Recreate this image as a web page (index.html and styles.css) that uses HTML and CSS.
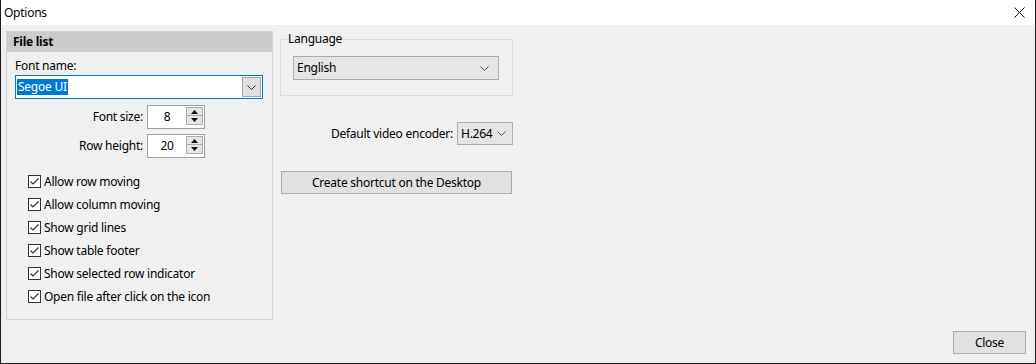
FILE: index.html
```html
<!DOCTYPE html>
<html lang="en">

<head>
    <meta charset="UTF-8">
    <title>Options</title>
    <link rel="stylesheet" href="styles.css">
</head>

<body>
    <div class="window">
        <div class="titlebar">
            <span>Options</span>
            <svg class="x" width="11" height="11" viewBox="0 0 11 11">
                <path d="M0.5 0.5 L10.5 10.5 M10.5 0.5 L0.5 10.5" stroke="#111" stroke-width="1" fill="none" />
            </svg>
        </div>

        <div class="client">
            <div class="main">
                <div class="panel">
                    <div class="panel-head">File list</div>
                    <div class="panel-body">
                        <div class="label">Font name:</div>
                        <div class="combo focus">
                            <span class="sel">Segoe UI</span>
                            <span class="drop">
                                <svg width="9" height="5" viewBox="0 0 9 5"><path d="M0.5 0.5 L4.5 4.5 L8.5 0.5" stroke="#333" fill="none" /></svg>
                            </span>
                        </div>

                        <div class="spin-row">
                            <span class="spin-label">Font size:</span>
                            <div class="spin">
                                <span class="spin-value">8</span>
                                <span class="spin-btns">
                                    <span class="spin-btn"><svg width="7" height="4" viewBox="0 0 7 4"><path d="M0 4 L3.5 0 L7 4 Z" fill="#111" /></svg></span>
                                    <span class="spin-btn"><svg width="7" height="4" viewBox="0 0 7 4"><path d="M0 0 L3.5 4 L7 0 Z" fill="#111" /></svg></span>
                                </span>
                            </div>
                        </div>
                        <div class="spin-row">
                            <span class="spin-label">Row height:</span>
                            <div class="spin">
                                <span class="spin-value">20</span>
                                <span class="spin-btns">
                                    <span class="spin-btn"><svg width="7" height="4" viewBox="0 0 7 4"><path d="M0 4 L3.5 0 L7 4 Z" fill="#111" /></svg></span>
                                    <span class="spin-btn"><svg width="7" height="4" viewBox="0 0 7 4"><path d="M0 0 L3.5 4 L7 0 Z" fill="#111" /></svg></span>
                                </span>
                            </div>
                        </div>

                        <div class="checks">
                            <label class="check"><span class="box"></span>Allow row moving</label>
                            <label class="check"><span class="box"></span>Allow column moving</label>
                            <label class="check"><span class="box"></span>Show grid lines</label>
                            <label class="check"><span class="box"></span>Show table footer</label>
                            <label class="check"><span class="box"></span>Show selected row indicator</label>
                            <label class="check"><span class="box"></span>Open file after click on the icon</label>
                        </div>
                    </div>
                </div>

                <div class="side">
                    <fieldset class="group">
                        <legend>Language</legend>
                        <div class="combo lang">
                            <span>English</span>
                            <svg class="chev" width="9" height="5" viewBox="0 0 9 5"><path d="M0.5 0.5 L4.5 4.5 L8.5 0.5" stroke="#555" fill="none" /></svg>
                        </div>
                    </fieldset>

                    <div class="encoder-row">
                        <span>Default video encoder:</span>
                        <div class="combo encoder">
                            <span>H.264</span>
                            <svg class="chev" width="9" height="5" viewBox="0 0 9 5"><path d="M0.5 0.5 L4.5 4.5 L8.5 0.5" stroke="#555" fill="none" /></svg>
                        </div>
                    </div>

                    <button class="btn shortcut">Create shortcut on the Desktop</button>
                </div>
            </div>

            <div class="footer">
                <button class="btn close">Close</button>
            </div>
        </div>
    </div>
</body>

</html>
```

FILE: styles.css
```css
* {
    box-sizing: border-box;
}

body {
    margin: 0;
    font-family: "Noto Sans", "Liberation Sans", sans-serif;
    font-size: 12px;
    line-height: 16px;
    letter-spacing: -0.25px;
    color: #000;
}

.window {
    width: 1036px;
    height: 364px;
    border: 1px solid #1b1b1b;
    border-top: 0;
    display: flex;
    flex-direction: column;
    background: #f0f0f0;
}

.titlebar {
    height: 25px;
    background: #fff;
    display: flex;
    align-items: center;
    justify-content: space-between;
    padding: 0 10px 0 3px;
}

.client {
    flex: 1;
    display: flex;
    flex-direction: column;
    padding: 6px 9px 9px 5px;
}

.main {
    flex: 1;
    display: flex;
    align-items: flex-start;
    gap: 7px;
}

/* left panel */
.panel {
    width: 267px;
    height: 289px;
    border: 1px solid #d2d2d2;
}

.panel-head {
    height: 20px;
    line-height: 20px;
    padding-left: 6px;
    background: #cccccc;
    font-weight: bold;
}

.panel-body {
    padding: 6px 8px 0 8px;
}

.label {
    margin-bottom: 1px;
}

.combo {
    display: flex;
    align-items: center;
    border: 1px solid #adadad;
    background: #e5e5e5;
}

.combo.focus {
    width: 248px;
    height: 24px;
    border-color: #0078d7;
    background: #fff;
    padding-left: 1px;
}

.sel {
    background: #0078d7;
    color: #fff;
    padding: 0 1px;
}

.drop {
    margin-left: auto;
    margin-right: 1px;
    width: 19px;
    height: 20px;
    border: 1px solid #a6a6a6;
    background: #e0e0e0;
    display: flex;
    align-items: center;
    justify-content: center;
}

.spin-row {
    display: flex;
    align-items: center;
    margin-top: 6px;
}

.spin-row+.spin-row {
    margin-top: 5px;
}

.spin-label {
    width: 132px;
    padding-right: 4px;
    text-align: right;
}

.spin {
    width: 58px;
    height: 24px;
    border: 1px solid #a0a0a0;
    background: #fff;
    display: flex;
}

.spin-value {
    flex: 1;
    text-align: center;
    line-height: 22px;
}

.spin-btns {
    width: 17px;
    margin: 1px 1px 0 0;
    display: flex;
    flex-direction: column;
}

.spin-btn {
    height: 9px;
    border: 1px solid #adadad;
    background: #e5e5e5;
    display: flex;
    align-items: center;
    justify-content: center;
}

.spin-btn+.spin-btn {
    border-top: 0;
}

.checks {
    margin-top: 12px;
    padding-left: 13px;
}

.check {
    height: 23px;
    display: flex;
    align-items: center;
    gap: 3px;
}

.box {
    width: 13px;
    height: 13px;
    border: 1px solid #333;
    background: #fff url("data:image/svg+xml;utf8,<svg xmlns='http://www.w3.org/2000/svg' width='11' height='11'><path d='M1.5 5.5 L4 8 L9.5 2.5' stroke='%23333' stroke-width='1.2' fill='none'/></svg>") no-repeat center;
}

/* right side */
.side {
    width: 233px;
}

.group {
    margin: 0;
    padding: 0 12px 15px 12px;
    border: 1px solid #dcdcdc;
    min-width: 0;
}

.group legend {
    padding: 0 1px;
    margin-left: -6px;
}

.combo.lang {
    width: 206px;
    height: 24px;
    margin-top: 9px;
    padding: 0 9px 0 3px;
    justify-content: space-between;
}

.encoder-row {
    margin-top: 26px;
    display: flex;
    align-items: center;
    justify-content: flex-end;
    gap: 4px;
}

.combo.encoder {
    width: 56px;
    height: 23px;
    padding: 0 6px 0 3px;
    justify-content: space-between;
}

.btn {
    font: inherit;
    letter-spacing: inherit;
    color: #000;
    height: 23px;
    border: 1px solid #adadad;
    background: #e1e1e1;
    padding: 0;
}

.shortcut {
    display: block;
    width: 231px;
    margin: 26px 0 0 1px;
}

.footer {
    display: flex;
    justify-content: flex-end;
}

.close {
    width: 73px;
}
```
